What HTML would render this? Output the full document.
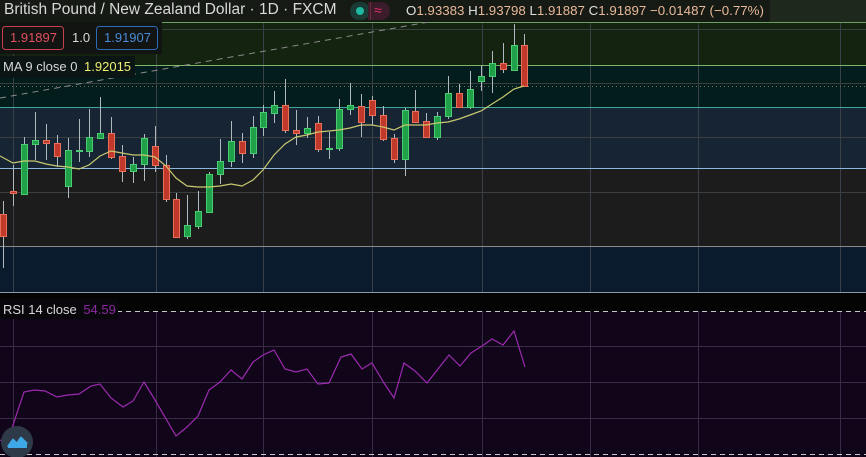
<!DOCTYPE html>
<html><head><meta charset="utf-8"><style>
html,body{margin:0;padding:0;background:#110519;}
body{width:866px;height:457px;overflow:hidden;position:relative;font-family:"Liberation Sans",sans-serif;}
svg{position:absolute;left:0;top:0;}
.t{position:absolute;white-space:nowrap;}
</style></head><body>
<svg width="866" height="457" viewBox="0 0 866 457">
<rect x="0" y="0" width="866" height="22" fill="#1e281c"/>
<rect x="0" y="22" width="866" height="43" fill="#142210"/>
<rect x="0" y="65" width="866" height="42" fill="#031d1d"/>
<rect x="0" y="107" width="866" height="61" fill="#172433"/>
<rect x="0" y="168" width="866" height="78" fill="#1c1c1c"/>
<rect x="0" y="246" width="866" height="46" fill="#0b1b2e"/>
<rect x="0" y="292" width="866" height="19" fill="#040404"/>
<rect x="0" y="311" width="866" height="146" fill="#110519"/>
<g stroke="#3a4040" stroke-width="1">
<line x1="0" y1="29.5" x2="866" y2="29.5"/>
<line x1="0" y1="83.5" x2="866" y2="83.5"/>
<line x1="0" y1="137.5" x2="866" y2="137.5"/>
<line x1="0" y1="192.5" x2="866" y2="192.5"/>
</g>
<g stroke="#3a4048" stroke-width="1">
<line x1="13.5" y1="22" x2="13.5" y2="292"/>
<line x1="156.5" y1="22" x2="156.5" y2="292"/>
<line x1="263.5" y1="22" x2="263.5" y2="292"/>
<line x1="372.5" y1="22" x2="372.5" y2="292"/>
<line x1="482.5" y1="22" x2="482.5" y2="292"/>
<line x1="590.5" y1="22" x2="590.5" y2="292"/>
<line x1="698.5" y1="22" x2="698.5" y2="292"/>
<line x1="840.5" y1="22" x2="840.5" y2="292"/>
</g>
<line x1="0" y1="86.5" x2="866" y2="86.5" stroke="#707070" stroke-dasharray="1,3"/>
<line x1="0" y1="22.5" x2="866" y2="22.5" stroke="#6aa060"/>
<line x1="0" y1="65.5" x2="866" y2="65.5" stroke="#7ab868"/>
<line x1="0" y1="107.5" x2="866" y2="107.5" stroke="#3fa898"/>
<line x1="0" y1="168.5" x2="866" y2="168.5" stroke="#8ab8e0"/>
<line x1="0" y1="246.5" x2="866" y2="246.5" stroke="#8a8a8a"/>
<line x1="0" y1="292.5" x2="866" y2="292.5" stroke="#8a9aa8"/>
<line x1="0" y1="98" x2="440" y2="20" stroke="#8a8a8a" stroke-dasharray="6,5"/>
<g stroke="#3a2c48">
<line x1="0" y1="346.5" x2="866" y2="346.5"/>
<line x1="0" y1="382.5" x2="866" y2="382.5"/>
<line x1="0" y1="418.5" x2="866" y2="418.5"/>
<line x1="13.5" y1="311" x2="13.5" y2="457"/>
<line x1="156.5" y1="311" x2="156.5" y2="457"/>
<line x1="263.5" y1="311" x2="263.5" y2="457"/>
<line x1="372.5" y1="311" x2="372.5" y2="457"/>
<line x1="482.5" y1="311" x2="482.5" y2="457"/>
<line x1="590.5" y1="311" x2="590.5" y2="457"/>
<line x1="698.5" y1="311" x2="698.5" y2="457"/>
<line x1="840.5" y1="311" x2="840.5" y2="457"/>
</g>
<line x1="0" y1="311.5" x2="866" y2="311.5" stroke="#c8c8c8" stroke-dasharray="5,4"/>
<line x1="0" y1="454.5" x2="866" y2="454.5" stroke="#c8c8c8" stroke-dasharray="5,4"/>
<g stroke="#b0b8c0" stroke-width="1">
<line x1="3.5" y1="201" x2="3.5" y2="268"/><line x1="13.5" y1="165" x2="13.5" y2="206"/>
<line x1="24.5" y1="137" x2="24.5" y2="195"/><line x1="35.5" y1="112" x2="35.5" y2="160"/>
<line x1="46.5" y1="124" x2="46.5" y2="160"/><line x1="57.5" y1="135" x2="57.5" y2="167"/>
<line x1="68.5" y1="138" x2="68.5" y2="198"/><line x1="79.5" y1="119" x2="79.5" y2="162"/>
<line x1="89.5" y1="109" x2="89.5" y2="157"/><line x1="100.5" y1="97" x2="100.5" y2="139"/>
<line x1="111.5" y1="117" x2="111.5" y2="159"/><line x1="122.5" y1="145" x2="122.5" y2="182"/>
<line x1="133.5" y1="157" x2="133.5" y2="183"/><line x1="144.5" y1="134" x2="144.5" y2="181"/>
<line x1="155.5" y1="126" x2="155.5" y2="172"/><line x1="166.5" y1="155" x2="166.5" y2="202"/>
<line x1="176.5" y1="193" x2="176.5" y2="238"/><line x1="187.5" y1="195" x2="187.5" y2="239"/>
<line x1="198.5" y1="191" x2="198.5" y2="229"/><line x1="209.5" y1="172" x2="209.5" y2="212"/>
<line x1="220.5" y1="139" x2="220.5" y2="184"/><line x1="231.5" y1="121" x2="231.5" y2="167"/>
<line x1="242.5" y1="133" x2="242.5" y2="163"/><line x1="253.5" y1="116" x2="253.5" y2="158"/>
<line x1="263.5" y1="105" x2="263.5" y2="136"/><line x1="274.5" y1="91" x2="274.5" y2="123"/>
<line x1="285.5" y1="79" x2="285.5" y2="133"/><line x1="296.5" y1="110" x2="296.5" y2="145"/>
<line x1="307.5" y1="117" x2="307.5" y2="138"/><line x1="318.5" y1="116" x2="318.5" y2="152"/>
<line x1="329.5" y1="132" x2="329.5" y2="159"/><line x1="339.5" y1="99" x2="339.5" y2="151"/>
<line x1="350.5" y1="83" x2="350.5" y2="115"/><line x1="361.5" y1="94" x2="361.5" y2="137"/>
<line x1="372.5" y1="96" x2="372.5" y2="125"/><line x1="383.5" y1="106" x2="383.5" y2="141"/>
<line x1="394.5" y1="134" x2="394.5" y2="163"/><line x1="405.5" y1="108" x2="405.5" y2="176"/>
<line x1="415.5" y1="90" x2="415.5" y2="123"/><line x1="426.5" y1="113" x2="426.5" y2="138"/>
<line x1="437.5" y1="112" x2="437.5" y2="140"/><line x1="448.5" y1="76" x2="448.5" y2="119"/>
<line x1="459.5" y1="84" x2="459.5" y2="108"/><line x1="470.5" y1="71" x2="470.5" y2="109"/>
<line x1="481.5" y1="66" x2="481.5" y2="91"/><line x1="492.5" y1="51" x2="492.5" y2="93"/>
<line x1="503.5" y1="43" x2="503.5" y2="73"/><line x1="514.5" y1="24" x2="514.5" y2="70"/>
<line x1="524.5" y1="34" x2="524.5" y2="86"/>
</g>
<g fill="#c0392b" stroke="#e8705a" stroke-width="1">
<rect x="0.5" y="214.5" width="6" height="22"/><rect x="10.5" y="191.5" width="6" height="2"/>
<rect x="43.5" y="140.5" width="6" height="3"/><rect x="54.5" y="143.5" width="6" height="13"/>
<rect x="108.5" y="133.5" width="6" height="24"/><rect x="119.5" y="156.5" width="6" height="15"/>
<rect x="152.5" y="146.5" width="6" height="19"/><rect x="163.5" y="165.5" width="6" height="34"/>
<rect x="173.5" y="199.5" width="6" height="38"/><rect x="239.5" y="141.5" width="6" height="12"/>
<rect x="282.5" y="105.5" width="6" height="25"/><rect x="293.5" y="130.5" width="6" height="3"/>
<rect x="315.5" y="123.5" width="6" height="26"/><rect x="358.5" y="106.5" width="6" height="16"/>
<rect x="369.5" y="100.5" width="6" height="15"/><rect x="380.5" y="115.5" width="6" height="24"/>
<rect x="391.5" y="138.5" width="6" height="21"/><rect x="412.5" y="111.5" width="6" height="11"/>
<rect x="423.5" y="121.5" width="6" height="16"/><rect x="456.5" y="93.5" width="6" height="14"/>
<rect x="500.5" y="63.5" width="6" height="6"/><rect x="521.5" y="45.5" width="6" height="41"/>
</g>
<g fill="#21a04a" stroke="#4ccc70" stroke-width="1">
<rect x="21.5" y="144.5" width="6" height="50"/><rect x="32.5" y="140.5" width="6" height="4"/>
<rect x="65.5" y="150.5" width="6" height="36"/><rect x="76.5" y="150.5" width="6" height="1"/>
<rect x="86.5" y="137.5" width="6" height="14"/><rect x="97.5" y="133.5" width="6" height="5"/>
<rect x="130.5" y="164.5" width="6" height="7"/><rect x="141.5" y="138.5" width="6" height="26"/>
<rect x="184.5" y="225.5" width="6" height="11"/><rect x="195.5" y="211.5" width="6" height="15"/>
<rect x="206.5" y="174.5" width="6" height="38"/><rect x="217.5" y="161.5" width="6" height="13"/>
<rect x="228.5" y="141.5" width="6" height="20"/><rect x="250.5" y="127.5" width="6" height="26"/>
<rect x="260.5" y="112.5" width="6" height="15"/><rect x="271.5" y="105.5" width="6" height="8"/>
<rect x="304.5" y="128.5" width="6" height="5"/><rect x="326.5" y="148.5" width="6" height="1"/>
<rect x="336.5" y="109.5" width="6" height="39"/><rect x="347.5" y="105.5" width="6" height="4"/>
<rect x="402.5" y="110.5" width="6" height="49"/><rect x="434.5" y="116.5" width="6" height="21"/>
<rect x="445.5" y="93.5" width="6" height="23"/><rect x="467.5" y="89.5" width="6" height="18"/>
<rect x="478.5" y="76.5" width="6" height="5"/><rect x="489.5" y="63.5" width="6" height="13"/>
<rect x="511.5" y="45.5" width="6" height="25"/>
</g>
<polyline fill="none" stroke="#c8c870" stroke-width="1.2" points="0,156 13,163 24,161 35,161 46,164 57,166 68,167 79,169 89,165 100,156 111,151 122,153 133,155 144,155 155,157 166,166 176,178 187,186 198,187 209,187 220,186 231,184 242,186 253,180 263,170 274,155 285,144 296,137 307,135 318,132 329,131 339,130 350,128 361,125 372,125 383,127 394,130 405,125 415,125 426,125 437,123 448,122 459,119 470,115 481,111 492,104 503,97 514,89 524,86"/>
<polyline fill="none" stroke="#9c2ab0" stroke-width="1.2" points="0,440 7,443 24,392 34,390 45,391 57,397 68,395 79,394 91,386 100,384 111,398 123,407 133,401 144,382 155,400 176,436 187,427 198,416 209,390 220,382 231,370 242,379 253,362 263,355 274,350 285,369 296,372 307,369 318,384 329,383 341,357 351,354 362,369 372,363 384,383 394,398 404,363 415,371 427,383 438,369 449,355 460,366 471,353 482,346 492,339 503,345 514,331 525,367"/>
<rect x="0" y="0" width="770" height="22" fill="#161a15"/>
<rect x="350" y="2" width="20" height="18" rx="9" fill="#1c3a34"/>
<rect x="368" y="2" width="22" height="18" rx="9" fill="#3a1c2a"/>
<rect x="368" y="2" width="6" height="18" fill="#3a1c2a"/>
<line x1="370.5" y1="2" x2="370.5" y2="20" stroke="#6a2a3a"/>
<circle cx="360" cy="11" r="4" fill="#1fb8a0"/>
<rect x="0" y="22" width="162" height="32" fill="#121412"/>
<rect x="2.5" y="26.5" width="61" height="23" rx="3" fill="none" stroke="#c84050"/>
<rect x="96.5" y="26.5" width="61" height="23" rx="3" fill="none" stroke="#2e6ab8"/>
<rect x="0" y="56" width="135" height="22" fill="#0b1514"/>
<rect x="0" y="299" width="118" height="20" fill="#0a070c"/>
<circle cx="17" cy="442" r="16" fill="#2e3a48"/>
<path d="M8 447 L13 440 L17 444 L21 438 L27 444 L27 448 L8 448 Z" fill="#3fa9e8"/>
<path d="M8 447 L13 440 L17 444 L21 438 L27 444" fill="none" stroke="#3fa9e8" stroke-width="2.5" stroke-linejoin="round"/>
</svg>
<div class="t" style="left:4px;top:1px;font-size:15.5px;color:#d8d8d8;">British Pound / New Zealand Dollar · 1D · FXCM</div>
<div class="t" style="left:374px;top:2px;font-size:14px;color:#e0306a;">≈</div>
<div class="t" style="left:406px;top:3px;font-size:13.3px;color:#e8b898;"><span style="color:#e0e0e0">O</span>1.93383 <span style="color:#e0e0e0">H</span>1.93798 <span style="color:#e0e0e0">L</span>1.91887 <span style="color:#e0e0e0">C</span>1.91897 −0.01487 (−0.77%)</div>
<div class="t" style="left:10px;top:30px;font-size:13px;color:#e05060;">1.91897</div>
<div class="t" style="left:72px;top:30px;font-size:13px;color:#d8d8d8;">1.0</div>
<div class="t" style="left:104px;top:30px;font-size:13px;color:#4a8ad8;">1.91907</div>
<div class="t" style="left:3px;top:59px;font-size:13px;color:#d8d8d8;">MA 9 close 0 <span style="color:#f0f070;margin-left:3px">1.92015</span></div>
<div class="t" style="left:3px;top:302px;font-size:13px;color:#d8d8d8;">RSI 14 close <span style="color:#8a2aa0;margin-left:3px">54.59</span></div>
</body></html>
